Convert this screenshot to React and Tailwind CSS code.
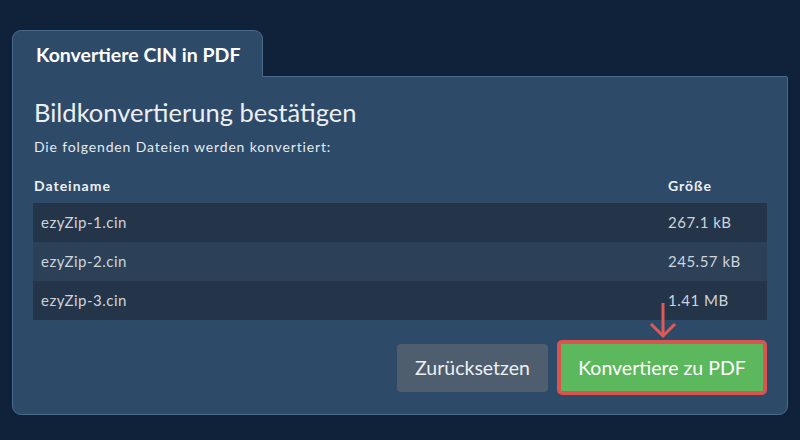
const files = [
  { name: 'ezyZip-1.cin', size: '267.1 kB' },
  { name: 'ezyZip-2.cin', size: '245.57 kB' },
  { name: 'ezyZip-3.cin', size: '1.41 MB' },
];

export default function App() {
  return (
    <div className="w-[800px] h-[440px] bg-[#10223a] pt-[30px] px-[12px] font-['Lato','Noto_Sans',sans-serif]">
      {/* Tab */}
      <div className="relative z-10 w-[251px] h-[47px] bg-[#2d4a69] border border-b-0 border-[#4b6a8b] rounded-t-[9px] pl-[23px] pt-[12px]">
        <span className="text-[19.5px] font-bold text-white leading-[24px]">Konvertiere CIN in PDF</span>
      </div>

      {/* Panel */}
      <div className="-mt-px w-[776px] h-[339px] bg-[#2d4a69] border border-[#4b6a8b] rounded-b-[9px] rounded-tr-[2px] px-[20px] pt-[19px]">
        <h1 className="text-[25.5px] leading-[32px] text-[#eceff2] pl-px">Bildkonvertierung bestätigen</h1>
        <p className="mt-[11px] text-[14px] tracking-[0.85px] leading-[16px] text-[#e6eaee] pl-px">Die folgenden Dateien werden konvertiert:</p>

        <table className="mt-[20px] w-[734px] text-[15px] tracking-[0.5px]">
          <thead>
            <tr className="h-[28px]">
              <th className="text-left font-bold text-[14px] tracking-[1px] text-[#eef1f4] pl-px align-top">Dateiname</th>
              <th className="text-left font-bold text-[14px] tracking-[1px] text-[#eef1f4] w-[99px] align-top">Größe</th>
            </tr>
          </thead>
          <tbody>
            {files.map((f, i) => (
              <tr key={f.name} className={i % 2 === 1 ? 'h-[39px] bg-[#2c4158]' : 'h-[39px] bg-[#253549]'}>
                <td className="pl-[8px] text-[#cdd4db]">{f.name}</td>
                <td className="text-[#cdd4db]">{f.size}</td>
              </tr>
            ))}
          </tbody>
        </table>

        <div className="relative mt-[20px] flex justify-end items-center gap-[9px]">
          <button className="w-[151px] h-[48px] rounded-[4px] bg-[#4e5e6e] text-[19.5px] text-[#eceff2]">
            Zurücksetzen
          </button>
          <button className="w-[210px] h-[55px] rounded-[5px] border-4 border-[#d9534f] bg-[#5cb85c] text-[19.5px] text-white">
            Konvertiere zu PDF
          </button>

          {/* pointer arrow */}
          <svg
            className="absolute right-[90px] top-[-37px]"
            width="28"
            height="36"
            viewBox="0 0 28 36"
            fill="none"
            stroke="#e05a55"
            strokeWidth="3"
          >
            <path d="M14 0 V32" />
            <path d="M2 21 L14 33 L26 21" />
          </svg>
        </div>
      </div>
    </div>
  );
}
